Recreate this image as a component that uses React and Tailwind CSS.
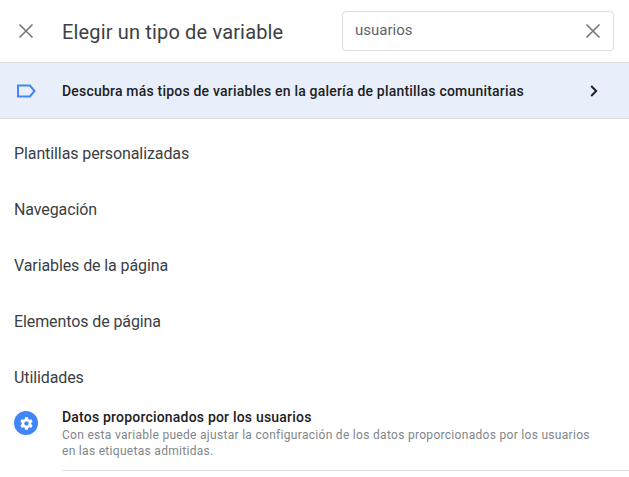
import React from "react";

const X = ({ className }) => (
  <svg viewBox="0 0 16 16" className={className} fill="none" stroke="currentColor" strokeWidth="1.6">
    <path d="M1.5 1.5 L14.5 14.5 M14.5 1.5 L1.5 14.5" />
  </svg>
);

const sections = ["Plantillas personalizadas", "Navegación", "Variables de la página", "Elementos de página", "Utilidades"];

export default function App() {
  return (
    <div className="w-[629px] h-[477px] overflow-hidden bg-white font-['Roboto',sans-serif] text-[#212121]">
      <header className="h-[62px] flex items-center">
        <div className="w-[62px] pl-[18px] shrink-0 flex">
          <X className="w-[16px] h-[16px] text-[#757575]" />
        </div>
        <h1 className="flex-1 text-[20px] leading-[24px] text-[#3c4043] pt-[1px] tracking-[0.16px]">Elegir un tipo de variable</h1>
        <div className="w-[272px] h-[40px] mr-[15px] mt-[-1px] border border-[#dadce0] rounded-[4px] flex items-center justify-between pl-[12px] pr-[12px]">
          <span className="text-[15px] text-[#5f6368]">usuarios</span>
          <X className="w-[16px] h-[16px] text-[#757575]" />
        </div>
      </header>
      <div className="h-[57px] bg-[#e8effa] border-y border-[#dadce0] flex items-center">
        <div className="w-[62px] pl-[17px] shrink-0 flex">
          <svg viewBox="0 0 19 14" className="w-[19px] h-[14px]" fill="none" stroke="#4285f4" strokeWidth="2">
            <path d="M1 1.5 H13 L17.5 7 L13 12.5 H1 Z" />
          </svg>
        </div>
        <p className="flex-1 text-[14px] font-medium text-[#202124] leading-[20px] tracking-[0.2px]">
          Descubra más tipos de variables en la galería de plantillas comunitarias
        </p>
        <svg viewBox="0 0 8 12" className="w-[8px] h-[12px] mr-[31px]" fill="none" stroke="#212121" strokeWidth="2">
          <path d="M1.2 1 L6.2 6 L1.2 11" />
        </svg>
      </div>
      <div className="flex flex-col pt-[7px]">
        {sections.map((s) => (
          <div key={s} className="h-[56px] flex items-center pl-[14px] text-[16px] text-[#3c4043] tracking-[-0.1px]">
            {s}
          </div>
        ))}
      </div>
      <div className="flex mt-[-1px]">
        <div className="w-[62px] pl-[14px] pt-[6px] shrink-0">
          <div className="w-[24px] h-[24px] rounded-full bg-[#4285f4] flex items-center justify-center">
            <svg viewBox="0 0 24 24" className="w-[15px] h-[15px]" fill="#ffffff">
              <path d="M19.43 12.98c.04-.32.07-.64.07-.98s-.03-.66-.07-.98l2.11-1.65c.19-.15.24-.42.12-.64l-2-3.46c-.12-.22-.39-.3-.61-.22l-2.49 1c-.52-.4-1.08-.73-1.69-.98l-.38-2.65C14.46 2.18 14.25 2 14 2h-4c-.25 0-.46.18-.49.42l-.38 2.65c-.61.25-1.17.59-1.69.98l-2.49-1c-.23-.09-.49 0-.61.22l-2 3.46c-.13.22-.07.49.12.64l2.11 1.65c-.04.32-.07.65-.07.98s.03.66.07.98l-2.11 1.65c-.19.15-.24.42-.12.64l2 3.46c.12.22.39.3.61.22l2.49-1c.52.4 1.08.73 1.69.98l.38 2.65c.03.24.24.42.49.42h4c.25 0 .46-.18.49-.42l.38-2.65c.61-.25 1.17-.59 1.69-.98l2.49 1c.23.09.49 0 .61-.22l2-3.46c.12-.22.07-.49-.12-.64l-2.11-1.65zM12 15.5c-1.93 0-3.5-1.57-3.5-3.5s1.57-3.5 3.5-3.5 3.5 1.57 3.5 3.5-1.57 3.5-3.5 3.5z" />
            </svg>
          </div>
        </div>
        <div className="flex-1 border-b border-[#dadce0] h-[66px] pt-[3px]">
          <p className="text-[14px] leading-[18px] font-medium text-[#202124] tracking-[0.2px]">Datos proporcionados por los usuarios</p>
          <p className="text-[12px] leading-[16px] text-[#80868b] tracking-[0.3px] w-[535px] mt-[1px]">
            Con esta variable puede ajustar la configuración de los datos proporcionados por los usuarios en las etiquetas admitidas.
          </p>
        </div>
      </div>
    </div>
  );
}
